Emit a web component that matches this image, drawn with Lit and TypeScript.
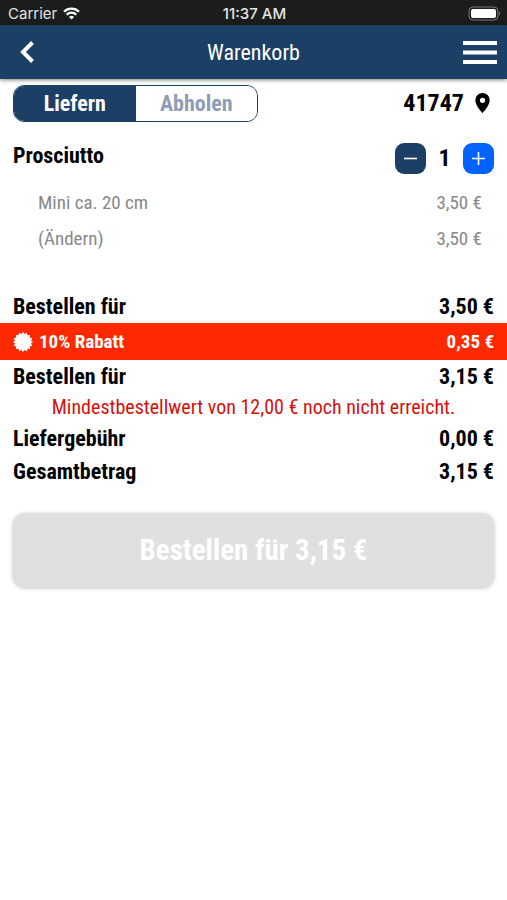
import { LitElement, html, css } from "lit";
import { customElement, state } from "lit/decorators.js";

const euro = (cents: number) =>
  `${Math.floor(cents / 100)},${String(cents % 100).padStart(2, "0")} €`;

@customElement("app-root")
export class AppRoot extends LitElement {
  @state() private mode = "deliver";
  @state() private count = 1;

  static styles = css`
    :host {
      display: block;
      min-height: 100vh;
      background: #fff;
      color: #000;
      font-family: "Roboto Condensed", "Liberation Sans Narrow", Roboto, sans-serif;
      font-size: 22px;
      line-height: 33px;
    }
    * { box-sizing: border-box; }
    svg { display: block; }
    button { font: inherit; border: 0; padding: 0; cursor: pointer; }
    .status {
      display: grid;
      grid-template-columns: 1fr auto 1fr;
      align-items: center;
      height: 25px;
      padding: 2px 6px 0 8px;
      background: #1a1d1c;
      color: #e4e4e4;
      font: 15px/22px Inter, sans-serif;
    }
    .carrier { display: flex; align-items: center; gap: 6px; }
    .time { font-weight: 500; }
    .battery { justify-self: end; }
    .nav {
      display: grid;
      grid-template-columns: 1fr auto 1fr;
      align-items: center;
      height: 54px;
      padding: 0 10px;
      background: #1c3f66;
      color: #fff;
      box-shadow: 0 1px 4px rgba(0, 0, 0, 0.5);
    }
    .nav h1 { margin: 0; font-size: 22px; font-weight: 400; }
    .nav button { background: none; color: #fff; }
    .back { justify-self: start; padding: 0 10px; }
    .menu { justify-self: end; }
    .top, .item, .row {
      display: flex;
      align-items: center;
      justify-content: space-between;
      padding: 0 13px;
      font-weight: 700;
    }
    .top { padding-top: 6px; }
    .segment {
      display: grid;
      grid-template-columns: 1fr 1fr;
      width: 245px;
      height: 37px;
      border: 1px solid #1c3f66;
      border-radius: 11px;
      overflow: hidden;
    }
    .segment button { background: #fff; color: #8e9db3; font-weight: 700; }
    .segment .on { background: #1c3f66; color: #fff; }
    .place {
      display: flex;
      align-items: center;
      gap: 11px;
      padding-right: 4px;
      background: none;
      color: #000;
      font-size: 24px;
      font-weight: 700;
    }
    .item { padding-top: 17px; }
    .name { margin: 0 0 6px; font-size: 22px; }
    .stepper { display: flex; align-items: center; }
    .stepper output { width: 37px; text-align: center; font-size: 24px; }
    .step {
      display: grid;
      place-items: center;
      width: 31px;
      height: 31px;
      border-radius: 9px;
      background: #1c3f66;
      color: #fff;
    }
    .plus { background: #0062ff; }
    .options {
      padding: 7px 25px 33px 38px;
      color: #888;
      font-size: 19px;
      line-height: 36px;
    }
    .option { display: flex; justify-content: space-between; }
    .option a { color: inherit; text-decoration: none; }
    .discount {
      height: 37px;
      background: #ff2900;
      color: #fff;
      font-size: 19px;
    }
    .label { display: flex; align-items: center; gap: 6px; }
    .note {
      margin: 0;
      text-align: center;
      color: #d8100c;
      font-size: 20px;
      line-height: 29px;
    }
    .foot { padding: 25px 13px; }
    .order {
      width: 100%;
      height: 74px;
      border-radius: 12px;
      background: #e0e0e0;
      color: #fff;
      font-size: 29px;
      font-weight: 700;
      box-shadow: 0 1px 4px rgba(0, 0, 0, 0.25);
    }
  `;

  private row(label: string, cents: number) {
    return html`<div class="row"><span>${label}</span><span>${euro(cents)}</span></div>`;
  }

  render() {
    const price = 350 * this.count;
    const discount = Math.round(price / 10);
    const total = price - discount;
    const badge = Array.from({ length: 32 }, (_, i) => {
      const r = i % 2 ? 8.2 : 10;
      const a = (i * Math.PI) / 16;
      return `${(10 + r * Math.sin(a)).toFixed(2)},${(10 - r * Math.cos(a)).toFixed(2)}`;
    }).join(" ");
    return html`
      <div class="status">
        <span class="carrier">Carrier
          <svg width="17" height="13" viewBox="0 0 17 13" fill="none" stroke="#fff" stroke-width="2.3">
            <path d="M1 4.8a10.6 10.6 0 0 1 15 0M3.7 7.7a6.8 6.8 0 0 1 9.6 0" />
            <path d="M8.5 12.5 6 9.9a3.6 3.6 0 0 1 5 0z" fill="#fff" stroke="none" />
          </svg>
        </span>
        <span class="time">11:37 AM</span>
        <svg class="battery" width="33" height="15" viewBox="0 0 33 15">
          <rect x="1" y="1" width="29" height="13" rx="4" fill="none" stroke="#777" />
          <rect x="3" y="3" width="25" height="9" rx="2" fill="#fff" />
          <path d="M31 5.500q2 2 0 4z" fill="#777" />
        </svg>
      </div>
      <header class="nav">
        <button class="back" aria-label="Zurück">
          <svg width="15" height="22" viewBox="0 0 15 22" fill="none" stroke="currentColor" stroke-width="4">
            <path d="M12.500 1.500 3 11l9.500 9.500" />
          </svg>
        </button>
        <h1>Warenkorb</h1>
        <button class="menu" aria-label="Menü">
          <svg width="34" height="23" viewBox="0 0 34 23" fill="currentColor">
            <path d="M0 0h34v4H0zM0 9.500h34v4H0zM0 19h34v4H0z" />
          </svg>
        </button>
      </header>
      <main>
        <div class="top">
          <div class="segment">
            <button class=${this.mode === "deliver" ? "on" : ""} @click=${() => (this.mode = "deliver")}>Liefern</button>
            <button class=${this.mode === "collect" ? "on" : ""} @click=${() => (this.mode = "collect")}>Abholen</button>
          </div>
          <button class="place">41747
            <svg width="15" height="22" viewBox="0 0 15 22">
              <path fill="currentColor" fill-rule="evenodd" d="M7.500 0A7.200 7.200 0 0 0 .3 7.200C.3 12.500 7.500 20 7.500 20s7.200-7.500 7.200-12.800A7.200 7.200 0 0 0 7.500 0zm0 4.700a2.600 2.600 0 1 1 0 5.200 2.600 2.600 0 0 1 0-5.200z" />
            </svg>
          </button>
        </div>
        <div class="item">
          <h2 class="name">Prosciutto</h2>
          <div class="stepper">
            <button class="step" aria-label="Weniger" @click=${() => (this.count = Math.max(1, this.count - 1))}>
              <svg width="15" height="15" viewBox="0 0 15 15" stroke="currentColor" stroke-width="1.6"><path d="M1 7.500h13" /></svg>
            </button>
            <output>${this.count}</output>
            <button class="step plus" aria-label="Mehr" @click=${() => this.count++}>
              <svg width="15" height="15" viewBox="0 0 15 15" stroke="currentColor" stroke-width="1.6"><path d="M1 7.500h13M7.500 1v13" /></svg>
            </button>
          </div>
        </div>
        <div class="options">
          <div class="option"><span>Mini ca. 20 cm</span><span>${euro(350)}</span></div>
          <div class="option"><a href="#">(Ändern)</a><span>${euro(price)}</span></div>
        </div>
        ${this.row("Bestellen für", price)}
        <div class="row discount">
          <span class="label">
            <svg width="20" height="20" viewBox="0 0 20 20"><polygon points=${badge} fill="currentColor" /></svg>
            10% Rabatt
          </span>
          <span>${euro(discount)}</span>
        </div>
        ${this.row("Bestellen für", total)}
        <p class="note">Mindestbestellwert von 12,00 € noch nicht erreicht.</p>
        ${this.row("Liefergebühr", 0)}
        ${this.row("Gesamtbetrag", total)}
        <div class="foot">
          <button class="order" disabled>Bestellen für ${euro(total)}</button>
        </div>
      </main>
    `;
  }
}
